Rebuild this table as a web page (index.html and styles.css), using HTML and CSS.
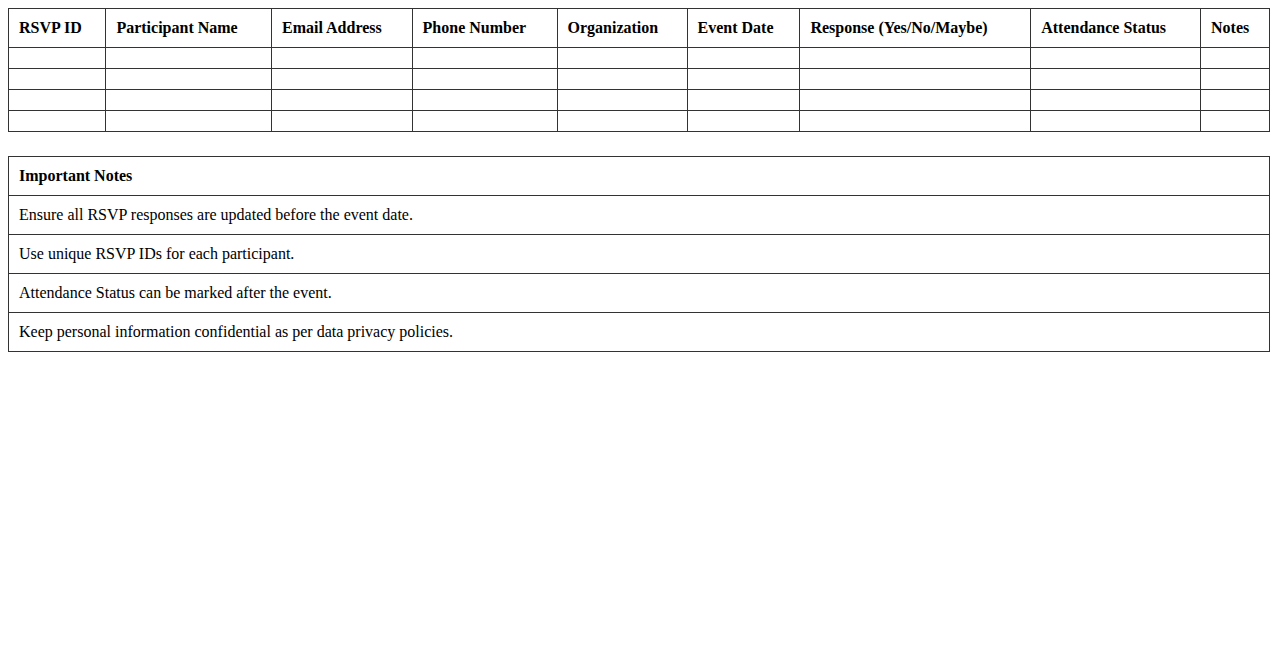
FILE: index.html
```html
<!DOCTYPE html>
<html>
<head>
<meta charset="utf-8">
<link rel="stylesheet" href="styles.css">
</head>
<body>
<table class="grid">
  <thead>
    <tr>
      <th>RSVP ID</th>
      <th>Participant Name</th>
      <th>Email Address</th>
      <th>Phone Number</th>
      <th>Organization</th>
      <th>Event Date</th>
      <th>Response (Yes/No/Maybe)</th>
      <th>Attendance Status</th>
      <th>Notes</th>
    </tr>
  </thead>
  <tbody>
    <tr><td></td><td></td><td></td><td></td><td></td><td></td><td></td><td></td><td></td></tr>
    <tr><td></td><td></td><td></td><td></td><td></td><td></td><td></td><td></td><td></td></tr>
    <tr><td></td><td></td><td></td><td></td><td></td><td></td><td></td><td></td><td></td></tr>
    <tr><td></td><td></td><td></td><td></td><td></td><td></td><td></td><td></td><td></td></tr>
  </tbody>
</table>
<table class="grid notes">
  <thead>
    <tr><th>Important Notes</th></tr>
  </thead>
  <tbody>
    <tr><td>Ensure all RSVP responses are updated before the event date.</td></tr>
    <tr><td>Use unique RSVP IDs for each participant.</td></tr>
    <tr><td>Attendance Status can be marked after the event.</td></tr>
    <tr><td>Keep personal information confidential as per data privacy policies.</td></tr>
  </tbody>
</table>
</body>
</html>
```
FILE: styles.css
```css
body {
  margin: 8px;
  font-family: "Liberation Serif", "Times New Roman", serif;
  font-size: 16px;
  color: #000;
  background: #fff;
}
.grid {
  width: 100%;
  border-collapse: collapse;
  margin-bottom: 24px;
}
.grid th,
.grid td {
  border: 1px solid #333;
  padding: 10px;
  text-align: left;
  line-height: 18px;
}
.grid th {
  font-weight: bold;
}
```
